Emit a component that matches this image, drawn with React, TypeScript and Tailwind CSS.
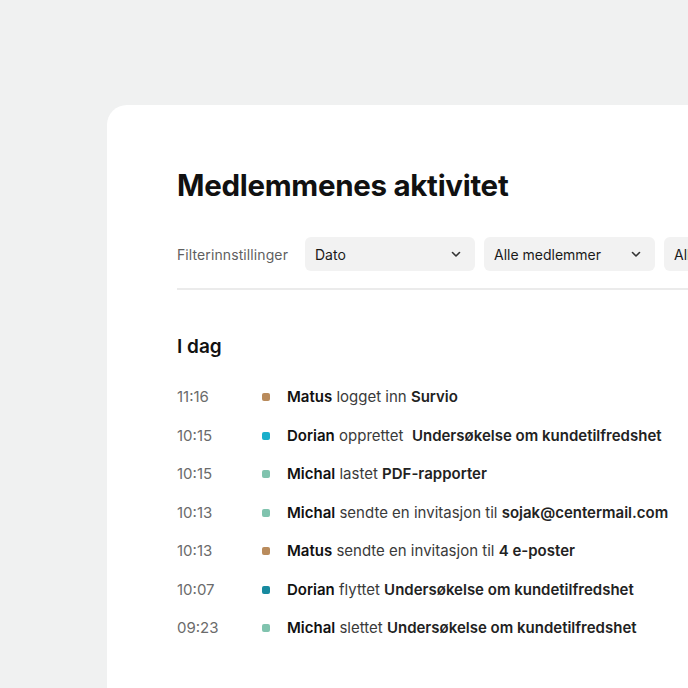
import React from "react";

const rows: { t: string; c: string; name: string; verb: string; obj: string }[] = [
  { t: "11:16", c: "bg-[#b98b5c]", name: "Matus", verb: "logget inn", obj: "Survio" },
  { t: "10:15", c: "bg-[#1aafcb]", name: "Dorian", verb: "opprettet\u00a0", obj: "Undersøkelse om kundetilfredshet" },
  { t: "10:15", c: "bg-[#80c3ae]", name: "Michal", verb: "lastet", obj: "PDF-rapporter" },
  { t: "10:13", c: "bg-[#80c3ae]", name: "Michal", verb: "sendte en invitasjon til", obj: "sojak@centermail.com" },
  { t: "10:13", c: "bg-[#b98b5c]", name: "Matus", verb: "sendte en invitasjon til", obj: "4 e-poster" },
  { t: "10:07", c: "bg-[#178a9f]", name: "Dorian", verb: "flyttet", obj: "Undersøkelse om kundetilfredshet" },
  { t: "09:23", c: "bg-[#80c3ae]", name: "Michal", verb: "slettet", obj: "Undersøkelse om kundetilfredshet" },
];

function Chevron() {
  return (
    <svg width="12" height="12" viewBox="0 0 12 12" fill="none">
      <path d="M2.5 4.5L6 8L9.5 4.5" stroke="#333" strokeWidth="1.6" strokeLinecap="round" strokeLinejoin="round" />
    </svg>
  );
}

function Select({ label, w }: { label: string; w: string }) {
  return (
    <div className={`flex h-[34px] ${w} shrink-0 items-center justify-between rounded-[6px] bg-[#f2f2f2] pl-[10px] pr-[13px] text-[14px] text-[#1a1a1a]`}>
      <span className="whitespace-nowrap">{label}</span>
      <Chevron />
    </div>
  );
}

export default function App() {
  return (
    <div className="h-[688px] w-[688px] overflow-hidden bg-[#f0f1f1] pl-[107px] pt-[105px]" style={{ fontFamily: "Inter, 'Noto Sans', sans-serif" }}>
      <div className="h-[700px] w-[700px] rounded-tl-[20px] bg-white pl-[70px] pt-[62px]">
        <h1 className="text-[29.5px] font-bold leading-[36px] tracking-[-0.3px] text-[#111]">Medlemmenes aktivitet</h1>
        <div className="mt-[34px] flex items-center">
          <span className="w-[128px] shrink-0 text-[14px] tracking-[0.1px] text-[#5f5f5f]">Filterinnstillinger</span>
          <div className="flex gap-[9px]">
            <Select label="Dato" w="w-[170px]" />
            <Select label="Alle medlemmer" w="w-[171px]" />
            <Select label="Alle aktiviteter" w="w-[171px]" />
          </div>
        </div>
        <div className="mt-[17px] h-[2px] w-full bg-[#ebebeb]" />
        <h2 className="mt-[45px] text-[19px] font-semibold leading-[24px] text-[#111]">I dag</h2>
        <div className="mt-[19px] flex flex-col">
          {rows.map((r, i) => (
            <div key={i} className="flex h-[38.5px] items-center text-[15px] text-[#3a3a3a]">
              <span className="w-[85px] shrink-0 text-[#6b6b6b]">{r.t}</span>
              <span className={`h-[8px] w-[8px] shrink-0 rounded-[2px] ${r.c}`} />
              <span className="ml-[17px] whitespace-nowrap">
                <span className="font-semibold text-[#111]">{r.name}</span> {r.verb}{" "}
                <span className="font-semibold text-[#222]">{r.obj}</span>
              </span>
            </div>
          ))}
        </div>
      </div>
    </div>
  );
}
